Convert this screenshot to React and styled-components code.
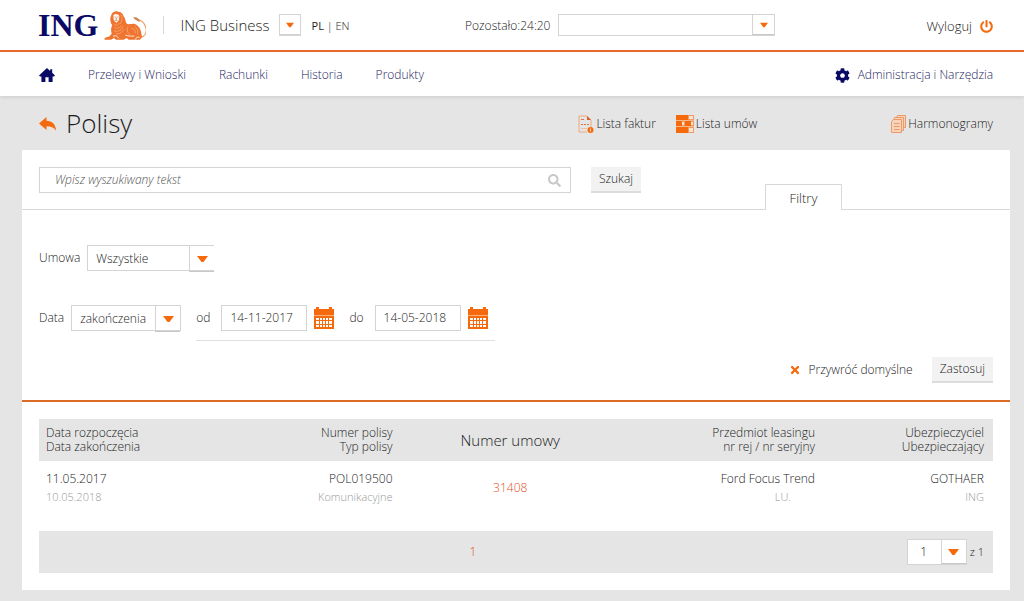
import React from 'react'
import styled, { createGlobalStyle, css } from 'styled-components'
import { FaCog, FaPowerOff, FaSearch, FaTimes } from 'react-icons/fa'

const ORANGE = '#f56a0c'
const NAVY = '#0a0a66'

const policies = [
  {
    start: '11.05.2017',
    end: '10.05.2018',
    number: 'POL019500',
    type: 'Komunikacyjne',
    contract: '31408',
    subject: 'Ford Focus Trend',
    plate: 'LU.',
    insurer: 'GOTHAER',
    insured: 'ING',
  },
]

const Lion = () => (
  <svg width="42" height="29" viewBox="12 12 126 87" aria-hidden="true">
    <path
      d="M122 92C134 88 141 77 138 64C135 50 127 41 114 38"
      fill="none"
      stroke="#f3a56f"
      strokeWidth="4"
    />
    <path d="M100 30C107 29 114 32 120 40C121 45 116 45 113 42C107 39 102 36 100 30Z" fill="#c98a5c" />
    <path
      d="M34 24C37 15 46 11 54 14C63 14 69 20 71 28C76 34 76 42 79 49C87 56 95 48 104 51C116 55 122 66 124 79L126 90L120 98H86L80 93L71 98H48L42 93L33 98H14C11 93 18 89 27 89L35 80C32 69 33 62 37 55C30 47 29 33 34 24Z"
      fill="#ee7430"
    />
    <path d="M40 25C44 19 55 20 58 27L57 39L49 48L41 39Z" fill="#fff3e8" />
    <path d="M44 30h3M52 30h3M49 32v6M46 40h6" stroke="#a3684a" strokeWidth="2" />
    <path
      d="M62 22C68 31 67 42 60 51M42 52C47 57 54 54 58 48M43 61C51 66 60 63 66 55M42 70C50 77 62 71 70 59M47 79C55 83 64 79 72 67M84 58C80 68 81 78 90 82M104 58C112 63 115 72 113 82M94 65C102 64 107 70 106 78"
      fill="none"
      stroke="#f9b384"
      strokeWidth="2"
    />
    <path d="M39 88C47 84 53 87 56 94M76 84C83 87 93 88 103 87M106 98C108 91 114 89 119 91" fill="none" stroke="#ffe6d3" strokeWidth="3" />
  </svg>
)

const HomeIcon = () => (
  <svg width="16" height="14" viewBox="0 0 16 14" fill={NAVY} aria-hidden="true">
    <path d="M8 0L0 7.4L1 8.4H2.4V14H6.4V9.2H9.6V14H13.6V8.4H15L16 7.4L13.2 4.8V1.2H11.2V3Z" />
  </svg>
)

const BackIcon = () => (
  <svg width="17" height="14" viewBox="0 0 17 14" fill={ORANGE} aria-hidden="true">
    <path d="M0 6.5L7.5 0V3.8C13 4 16.6 7 17 13.4C14.6 10.4 12 9.3 7.5 9.3V13Z" />
  </svg>
)

const InvoiceIcon = () => (
  <svg width="16" height="18" viewBox="0 0 16 18" fill="none" aria-hidden="true">
    <path d="M1 17V1H9L13 5V12M1 17H9" stroke="#f0a67c" />
    <path d="M9 1V5H13Z" fill="#d9602a" />
    <path d="M3 9.5H5M6 9.5H8M9 9.5H11M3 4.5H6" stroke="#e0753f" />
    <path d="M3 13.5H9" stroke="#f3bd9c" />
    <circle cx="12.5" cy="15" r="3" fill={ORANGE} />
    <path d="M12.5 13.5V16.5" stroke="#ffd9bd" />
  </svg>
)

const ContractsIcon = () => (
  <svg width="18" height="18" viewBox="0 0 18 18" aria-hidden="true">
    <path d="M0 0H18V18H0Z" fill="#f29a63" />
    <path d="M0 0H12V5H0ZM0 6H6V11H0ZM9 6H15V11H9ZM0 12H12V18H0Z" fill={ORANGE} />
    <path d="M13 1H17V4H13ZM6 7H8V10H6ZM15 7H17V10H15ZM13 13H17V17H13Z" fill="#fbe3d3" />
    <path d="M0 5.5H18M0 11.5H18" stroke="#f7b68c" />
  </svg>
)

const SchedulesIcon = () => (
  <svg width="15" height="18" viewBox="0 0 15 18" fill="#f6d3bb" stroke="#ee9a68" aria-hidden="true">
    <path d="M6.5.5H14.5V12.5H5.5V2.5Z" />
    <path d="M3.5 2.5H12.5V15.5H2.5V4.5Z" />
    <path d="M2.5 4.5H10.5V17.5H.5V6.5Z" />
    <path d="M3 8.5H8.5M3 11.5H8.5M3 14.5H8.5" />
  </svg>
)

const CalendarIcon = () => (
  <svg width="20" height="22" viewBox="0 0 20 22" aria-hidden="true">
    <path d="M0 2H2V0H5V2H15V0H18V2H20V22H0Z" fill={ORANGE} />
    <path d="M0 8.5H20" stroke="#ffb27c" />
    <path
      d="M2 11h3v2H2ZM6 11h2v2H6ZM9 11h2v2H9ZM12 11h2v2h-2ZM15 11h3v2h-3ZM2 14h3v3H2ZM6 14h2v3H6ZM9 14h2v3H9ZM12 14h2v3h-2ZM15 14h3v3h-3ZM2 18h3v2H2ZM6 18h2v2H6ZM9 18h2v2H9ZM12 18h2v2h-2ZM15 18h3v2h-3Z"
      fill="#fff"
    />
  </svg>
)

const Triangle = ({ size = 11 }) => (
  <svg width={size} height="6" viewBox="0 0 11 6" fill={ORANGE} aria-hidden="true">
    <path d="M0 0H11L6.5 6H4.5Z" />
  </svg>
)

const Dropdown = ({ label, options, width, height, cell, openEnd, centered }) => (
  <SelectBox $width={width} $height={height} $openEnd={openEnd}>
    <Select aria-label={label} $centered={centered}>
      {options.map(option => (
        <option key={option}>{option}</option>
      ))}
    </Select>
    <ArrowCell $cell={cell}>
      <Triangle size={height ? 8 : 11} />
    </ArrowCell>
  </SelectBox>
)

const App = () => (
  <>
    <GlobalStyle />
    <TopBar>
      <Brand>
        <Logo href="#">
          ING
          <Lion />
        </Logo>
        <Product>ING Business</Product>
        <SmallButton type="button" aria-label="Zmień system">
          <Triangle size={8} />
        </SmallButton>
        <Languages>
          <b>PL</b> | <PlainLink href="#">EN</PlainLink>
        </Languages>
      </Brand>
      <Session>
        <span>Pozostało:24:20</span>
        <Dropdown label="Klient" options={['']} width={217} height={22} cell={22} />
      </Session>
      <Logout type="button">
        Wyloguj
        <FaPowerOff size={13} color={ORANGE} />
      </Logout>
    </TopBar>

    <Nav>
      <PlainLink href="#" aria-label="Strona główna">
        <HomeIcon />
      </PlainLink>
      <NavLink href="#">Przelewy i Wnioski</NavLink>
      <NavLink href="#">Rachunki</NavLink>
      <NavLink href="#">Historia</NavLink>
      <NavLink href="#">Produkty</NavLink>
      <NavLink href="#" $end>
        <FaCog size={15} color={NAVY} />
        Administracja i Narzędzia
      </NavLink>
    </Nav>

    <TitleBar>
      <PlainLink href="#" aria-label="Wstecz">
        <BackIcon />
      </PlainLink>
      <Title>Polisy</Title>
      <Shortcuts>
        <Shortcut href="#">
          <InvoiceIcon />
          Lista faktur
        </Shortcut>
        <Shortcut href="#">
          <ContractsIcon />
          Lista umów
        </Shortcut>
      </Shortcuts>
      <Shortcut href="#">
        <SchedulesIcon />
        Harmonogramy
      </Shortcut>
    </TitleBar>

    <Panel>
      <SearchRow>
        <SearchField>
          <SearchInput aria-label="Szukaj polisy" placeholder="Wpisz wyszukiwany tekst" />
          <FaSearch size={13} color="#c8c8c8" />
        </SearchField>
        <Button type="button">Szukaj</Button>
        <Tab type="button">Filtry</Tab>
      </SearchRow>

      <Filters>
        <FilterRow>
          <span>Umowa</span>
          <Dropdown label="Umowa" options={['Wszystkie']} width={127} openEnd />
        </FilterRow>
        <FilterRow>
          <span>Data</span>
          <Dropdown label="Data" options={['zakończenia', 'rozpoczęcia']} width={110} />
          <DateRange>
            <label htmlFor="from">od</label>
            <DateInput id="from" defaultValue="14-11-2017" />
            <IconButton type="button" aria-label="Wybierz datę od">
              <CalendarIcon />
            </IconButton>
            <label htmlFor="to">do</label>
            <DateInput id="to" defaultValue="14-05-2018" />
            <IconButton type="button" aria-label="Wybierz datę do">
              <CalendarIcon />
            </IconButton>
          </DateRange>
        </FilterRow>
        <Actions>
          <ResetButton type="button">
            <FaTimes size={12} color={ORANGE} />
            Przywróć domyślne
          </ResetButton>
          <Button type="button">Zastosuj</Button>
        </Actions>
      </Filters>

      <Results>
        <Table>
          <colgroup>
            <Col $width="20%" />
            <Col $width="18%" />
            <Col $width="23%" />
            <Col />
            <Col $width="169px" />
          </colgroup>
          <thead>
            <tr>
              <Th $align="left">
                Data rozpoczęcia
                <br />
                Data zakończenia
              </Th>
              <Th>
                Numer polisy
                <br />
                Typ polisy
              </Th>
              <Th $align="center" $large>
                Numer umowy
              </Th>
              <Th>
                Przedmiot leasingu
                <br />
                nr rej / nr seryjny
              </Th>
              <Th>
                Ubezpieczyciel
                <br />
                Ubezpieczający
              </Th>
            </tr>
          </thead>
          <tbody>
            {policies.map(policy => (
              <tr key={policy.number}>
                <Td $align="left">
                  {policy.start}
                  <Minor>{policy.end}</Minor>
                </Td>
                <Td>
                  {policy.number}
                  <Minor>{policy.type}</Minor>
                </Td>
                <Td $align="center">
                  <AccentLink href="#">{policy.contract}</AccentLink>
                </Td>
                <Td>
                  {policy.subject}
                  <Minor $inset>{policy.plate}</Minor>
                </Td>
                <Td>
                  {policy.insurer}
                  <Minor>{policy.insured}</Minor>
                </Td>
              </tr>
            ))}
          </tbody>
        </Table>
        <Pagination>
          <Pages>
            <AccentLink href="#">1</AccentLink>
          </Pages>
          <Dropdown label="Strona" options={['1']} width={60} centered />
          <PageCount>z 1</PageCount>
        </Pagination>
      </Results>
    </Panel>
  </>
)

const GlobalStyle = createGlobalStyle`
  * {
    box-sizing: border-box;
  }

  body {
    background: #e5e5e5;
    color: #1c1c1c;
    font-family: 'Open Sans', 'Noto Sans', sans-serif;
    font-size: 12px;
    font-weight: 300;
    line-height: 16px;
    margin: 0;
  }

  button,
  input,
  select {
    color: inherit;
    font: inherit;
  }

  svg {
    display: block;
    flex-shrink: 0;
  }
`

const bare = css`
  background: none;
  border: 0;
  cursor: pointer;
  padding: 0;
`

const TopBar = styled.header`
  align-items: center;
  background: #fff;
  border-bottom: 2px solid #e8692a;
  display: grid;
  grid-template-columns: 427px 1fr auto;
  height: 52px;
  padding: 0 31px 0 38px;
`

const Brand = styled.div`
  align-items: center;
  display: flex;
`

const Logo = styled.a`
  align-items: center;
  border-right: 1px solid #d8d8d8;
  color: ${NAVY};
  display: flex;
  font-family: 'Liberation Serif', serif;
  font-size: 32px;
  font-weight: 700;
  gap: 6px;
  height: 18px;
  padding-right: 17px;
  text-decoration: none;
`

const Product = styled.span`
  font-size: 15px;
  margin: 0 9px 0 16px;
`

const SmallButton = styled.button`
  align-items: center;
  background: #fff;
  border: 1px solid #d4d4d4;
  border-bottom-width: 2px;
  display: flex;
  height: 22px;
  justify-content: center;
  padding: 0;
  width: 22px;
`

const Languages = styled.span`
  font-size: 11px;
  margin-left: 11px;
  padding-top: 2px;
`

const PlainLink = styled.a`
  color: inherit;
  text-decoration: none;
`

const Session = styled.div`
  align-items: center;
  display: flex;
  gap: 8px;

  & > span {
    padding-top: 2px;
  }
`

const Logout = styled.button`
  ${bare}
  align-items: center;
  display: flex;
  font-size: 13px;
  gap: 8px;
  padding-top: 2px;
`

const Nav = styled.nav`
  align-items: center;
  background: #fff;
  box-shadow: 0 2px 3px rgba(0, 0, 0, 0.08);
  display: flex;
  gap: 33px;
  height: 44px;
  padding: 2px 31px 0 39px;
`

const NavLink = styled.a`
  align-items: center;
  color: #26265f;
  display: flex;
  gap: 8px;
  margin-left: ${({ $end }) => ($end ? 'auto' : '0')};
  text-decoration: none;
`

const TitleBar = styled.div`
  align-items: center;
  display: flex;
  height: 54px;
  padding: 2px 31px 0 39px;
`

const Title = styled.h1`
  flex: 1;
  font-size: 26px;
  font-weight: 300;
  line-height: 32px;
  margin: 0 0 2px 10px;
`

const Shortcuts = styled.div`
  display: flex;
  gap: 20px;
  margin-right: 134px;
`

const Shortcut = styled.a`
  align-items: center;
  color: inherit;
  display: flex;
  gap: 2px;
  text-decoration: none;
`

const Panel = styled.main`
  background: #fff;
  margin: 0 14px 10px 22px;
`

const SearchRow = styled.div`
  align-items: flex-start;
  border-bottom: 1px solid #d8d8d8;
  display: flex;
  height: 60px;
  padding: 17px 168px 0 17px;
`

const SearchField = styled.div`
  align-items: center;
  border: 1px solid #d4d4d4;
  display: flex;
  flex: 1;
  height: 26px;
  margin-right: 20px;
  padding: 0 9px 0 15px;
`

const SearchInput = styled.input`
  border: 0;
  flex: 1;
  min-width: 0;
  outline: 0;
  padding: 0;

  &::placeholder {
    color: #555;
    font-style: italic;
  }
`

const Button = styled.button`
  background: #f2f2f2;
  border: 0;
  border-bottom: 2px solid #dcdcdc;
  cursor: pointer;
  height: 26px;
  padding: 0 8px;
`

const Tab = styled.button`
  align-self: flex-end;
  background: #fff;
  border: 1px solid #d8d8d8;
  border-bottom: 0;
  font-size: 13px;
  height: 26px;
  margin: 0 0 -1px 124px;
  padding: 0;
  width: 77px;
`

const Filters = styled.div`
  border-bottom: 2px solid #dc6b26;
  padding: 35px 17px 17px;
`

const FilterRow = styled.div`
  align-items: flex-start;
  display: flex;
  gap: 7px;
  line-height: 26px;
  margin-bottom: 34px;

  & + & {
    margin-bottom: 16px;
  }
`

const SelectBox = styled.div`
  background: #fff;
  border: 1px solid #d4d4d4;
  border-right-width: ${({ $openEnd }) => ($openEnd ? '0' : '1px')};
  display: grid;
  flex-shrink: 0;
  height: ${({ $height }) => $height || 26}px;
  width: ${({ $width }) => $width}px;
`

const Select = styled.select`
  appearance: none;
  background: none;
  border: 0;
  grid-area: 1 / 1;
  min-width: 0;
  outline: 0;
  padding: 0 26px 0 8px;

  ${({ $centered }) =>
    $centered &&
    css`
      padding-left: 0;
      text-align: center;
      text-align-last: center;
    `}
`

const ArrowCell = styled.span`
  align-items: center;
  border-bottom: 1px solid #c8c8c8;
  border-left: 1px solid #d4d4d4;
  display: flex;
  grid-area: 1 / 1;
  justify-content: center;
  justify-self: end;
  pointer-events: none;
  width: ${({ $cell }) => $cell || 25}px;
`

const DateRange = styled.div`
  border-bottom: 1px solid #e0e0e0;
  display: flex;
  margin-left: 8px;
  padding: 0 7px 9px 0;
`

const DateInput = styled.input`
  border: 1px solid #d4d4d4;
  height: 26px;
  margin: 0 7px 0 11px;
  padding: 0 8px;
  width: 86px;
`

const IconButton = styled.button`
  ${bare}
  align-self: center;

  & + label {
    margin-left: 15px;
  }
`

const Actions = styled.div`
  align-items: center;
  display: flex;
  gap: 19px;
  justify-content: flex-end;
`

const ResetButton = styled.button`
  ${bare}
  align-items: center;
  display: flex;
  gap: 8px;
`

const Results = styled.section`
  padding: 17px;
`

const Table = styled.table`
  border-collapse: collapse;
  table-layout: fixed;
  width: 100%;
`

const Col = styled.col`
  width: ${({ $width }) => $width || 'auto'};
`

const Th = styled.th`
  background: #e5e5e5;
  font-size: ${({ $large }) => ($large ? '15px' : '12px')};
  font-weight: 300;
  height: 42px;
  line-height: 14px;
  padding: 0 9px 0 7px;
  text-align: ${({ $align }) => $align || 'right'};
`

const Td = styled.td`
  height: 70px;
  line-height: 18px;
  padding: 8px 9px 24px 7px;
  text-align: ${({ $align }) => $align || 'right'};
`

const Minor = styled.div`
  color: #999;
  font-size: 11px;
  padding-right: ${({ $inset }) => ($inset ? '24px' : '0')};
`

const AccentLink = styled.a`
  color: #e2501f;
  text-decoration: none;
`

const Pagination = styled.div`
  align-items: center;
  background: #e5e5e5;
  display: flex;
  height: 42px;
  padding-right: 9px;
`

const Pages = styled.div`
  flex: 1;
  text-align: center;
`

const PageCount = styled.span`
  font-size: 11px;
  margin-left: 3px;
`

export default App
